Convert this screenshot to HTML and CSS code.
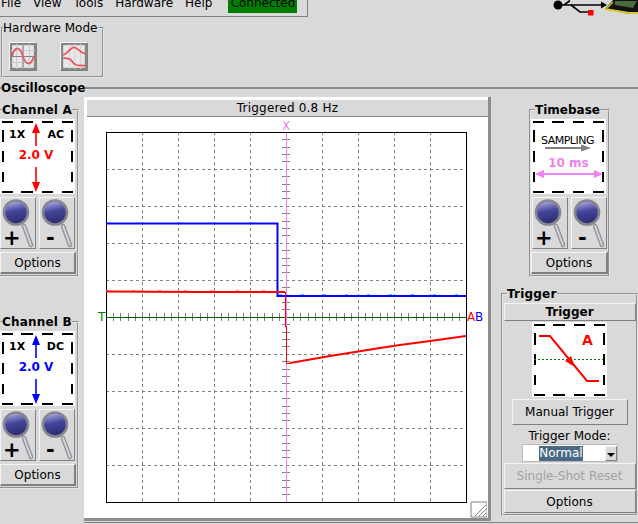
FILE: index.html
```html
<!DOCTYPE html>
<html lang="en">
<head>
    <meta charset="UTF-8">
    <title>Oscilloscope</title>
    <link rel="stylesheet" href="styles.css">
</head>
<body>
    <svg class="defs" width="0" height="0">
        <defs>
            <linearGradient id="lens" x1="0.3" y1="0" x2="0.5" y2="1">
                <stop offset="0" stop-color="#b4b4e8"/>
                <stop offset="0.45" stop-color="#45459c"/>
                <stop offset="1" stop-color="#2a2a6e"/>
            </linearGradient>
            <symbol id="magnifier" viewBox="0 0 36 52">
                <path d="M24 29 L31 48" stroke="#8f8f98" stroke-width="4.5" stroke-linecap="round"/>
                <path d="M24 29 L31 48" stroke="#d4d4dc" stroke-width="2" stroke-linecap="round"/>
                <circle cx="16" cy="15.5" r="12" fill="url(#lens)" stroke="#85858f" stroke-width="2.6"/>
            </symbol>
            <symbol id="dashes" viewBox="0 0 75 75">
                <path d="M2 3H13M21 3H33M42 3H53M62 3H73M2 73H13M21 73H33M42 73H53M62 73H73M3 11V23M3 32V43M3 53V63M72 11V23M72 32V43M72 53V63" stroke="#000" stroke-width="2" fill="none"/>
            </symbol>
        </defs>
    </svg>

    <div class="window">
        <div class="top">
            <div class="menubar">
                <span class="menu-item">File</span>
                <span class="menu-item">View</span>
                <span class="menu-item">Tools</span>
                <span class="menu-item">Hardware</span>
                <span class="menu-item">Help</span>
                <span class="status">Connected</span>
            </div>
            <svg class="usb" width="85" height="16" viewBox="0 0 85 16">
                <path d="M5 5 H50" stroke="#000" stroke-width="1.6"/>
                <path d="M48 1.5 L54 5 L48 8.5 Z" fill="#000"/>
                <circle cx="5" cy="5" r="4.5" fill="#000"/>
                <path d="M11 5 L17 0.5" stroke="#000" stroke-width="1.6"/>
                <path d="M18 5 L27 12 H35" stroke="#000" stroke-width="1.6" fill="none"/>
                <rect x="35" y="10" width="5.5" height="5.5" fill="#f00"/>
                <path d="M52 9 L60 0 H85 V14 H76 Z" fill="#111"/>
                <path d="M52 9 L76 13 H85" stroke="#d8c820" stroke-width="2" fill="none"/>
                <path d="M62 1 H84 L80 8 L62 5 Z" fill="#4a6a40"/>
                <path d="M60 2 L54 8" stroke="#d8c820" stroke-width="1.5"/>
            </svg>
        </div>

        <fieldset class="group hardware">
            <legend>Hardware Mode</legend>
            <div class="hardware-buttons">
                <button class="icon-button" type="button">
                    <svg width="26" height="27" viewBox="0 0 24 25">
                        <rect x="1" y="1" width="22" height="23" fill="#e8e8e8" stroke="#858585" stroke-width="2"/>
                        <path d="M6 1V24M12 1V24M18 1V24M1 7H23M1 18H23" stroke="#cccccc"/>
                        <path d="M12 1V24M1 12.5H23" stroke="#858585"/>
                        <path d="M2 12 C4 3 9 3 11.5 11 C14 20 19 23 22 12" stroke="#f05060" stroke-width="1.6" fill="none"/>
                    </svg>
                </button>
                <button class="icon-button" type="button">
                    <svg width="26" height="27" viewBox="0 0 24 25">
                        <rect x="1" y="1" width="22" height="23" fill="#e8e8e8" stroke="#858585" stroke-width="2"/>
                        <path d="M8 1V24M13 1V24M18 1V24" stroke="#d4d4d4"/>
                        <path d="M2 11 C7 10 8 4 12 4 C16 4 16 9 23 10" stroke="#f05060" stroke-width="1.6" fill="none"/>
                        <path d="M2 14 C8 14 9 15 11 18 C13 21 16 21 23 21" stroke="#f05060" stroke-width="1.6" fill="none"/>
                    </svg>
                </button>
            </div>
        </fieldset>

        <fieldset class="scope">
            <legend>Oscilloscope</legend>
            <div class="scope-row">
                <div class="channels">
                    <fieldset class="group channel">
                        <legend>Channel A</legend>
                        <div class="readout">
                            <svg class="dashes" width="75" height="75"><use href="#dashes"/></svg>
                            <span class="probe">1X</span>
                            <span class="coupling">AC</span>
                            <svg class="axis" width="10" height="69" viewBox="0 0 10 69">
                                <path d="M5 8V23M5 44V61" stroke="#f00" stroke-width="1.6"/>
                                <path d="M5 0 L9 10 H1 Z M5 69 L9 59 H1 Z" fill="#f00"/>
                            </svg>
                            <span class="volts red">2.0 V</span>
                        </div>
                        <div class="zoom-row">
                            <button class="zoom-button" type="button">
                                <svg width="36" height="52"><use href="#magnifier"/></svg>
                                <span class="sign">+</span>
                            </button>
                            <button class="zoom-button" type="button">
                                <svg width="36" height="52"><use href="#magnifier"/></svg>
                                <span class="sign minus">-</span>
                            </button>
                        </div>
                        <button class="options" type="button">Options</button>
                    </fieldset>
                    <fieldset class="group channel">
                        <legend>Channel B</legend>
                        <div class="readout">
                            <svg class="dashes" width="75" height="75"><use href="#dashes"/></svg>
                            <span class="probe">1X</span>
                            <span class="coupling">DC</span>
                            <svg class="axis" width="10" height="69" viewBox="0 0 10 69">
                                <path d="M5 8V23M5 44V61" stroke="#00f" stroke-width="1.6"/>
                                <path d="M5 0 L9 10 H1 Z M5 69 L9 59 H1 Z" fill="#00f"/>
                            </svg>
                            <span class="volts blue">2.0 V</span>
                        </div>
                        <div class="zoom-row">
                            <button class="zoom-button" type="button">
                                <svg width="36" height="52"><use href="#magnifier"/></svg>
                                <span class="sign">+</span>
                            </button>
                            <button class="zoom-button" type="button">
                                <svg width="36" height="52"><use href="#magnifier"/></svg>
                                <span class="sign minus">-</span>
                            </button>
                        </div>
                        <button class="options" type="button">Options</button>
                    </fieldset>
                </div>

                <div class="screen">
                    <div class="screen-title">Triggered 0.8 Hz</div>
                    <svg class="plot" width="400" height="401" viewBox="87 117 400 401">
                        <g class="grid">
                            <path d="M142.5 132V502M178.5 132V502M214.5 132V502M250.5 132V502M322.5 132V502M358.5 132V502M394.5 132V502M430.5 132V502"/>
                            <path d="M106 169.5H466M106 206.5H466M106 243.5H466M106 280.5H466M106 354.5H466M106 391.5H466M106 428.5H466M106 465.5H466"/>
                        </g>
                        <path class="ticks" d="M113.5 313V321M120.5 313V321M128.5 313V321M135.5 313V321M149.5 313V321M156.5 313V321M164.5 313V321M171.5 313V321M185.5 313V321M192.5 313V321M200.5 313V321M207.5 313V321M221.5 313V321M228.5 313V321M236.5 313V321M243.5 313V321M257.5 313V321M264.5 313V321M272.5 313V321M279.5 313V321M293.5 313V321M300.5 313V321M308.5 313V321M315.5 313V321M329.5 313V321M336.5 313V321M344.5 313V321M351.5 313V321M365.5 313V321M372.5 313V321M380.5 313V321M387.5 313V321M401.5 313V321M408.5 313V321M416.5 313V321M423.5 313V321M437.5 313V321M444.5 313V321M452.5 313V321M459.5 313V321"/>
                        <path class="ticks" d="M142.5 313V321M178.5 313V321M214.5 313V321M250.5 313V321M322.5 313V321M358.5 313V321M394.5 313V321M430.5 313V321"/>
                        <path class="ticks" d="M282 139.5H290M282 147.5H290M282 154.5H290M282 161.5H290M282 176.5H290M282 184.5H290M282 191.5H290M282 198.5H290M282 213.5H290M282 221.5H290M282 228.5H290M282 235.5H290M282 250.5H290M282 258.5H290M282 265.5H290M282 272.5H290M282 287.5H290M282 295.5H290M282 302.5H290M282 309.5H290M282 324.5H290M282 332.5H290M282 339.5H290M282 346.5H290M282 361.5H290M282 369.5H290M282 376.5H290M282 383.5H290M282 398.5H290M282 406.5H290M282 413.5H290M282 420.5H290M282 435.5H290M282 443.5H290M282 450.5H290M282 457.5H290M282 472.5H290M282 480.5H290M282 487.5H290M282 494.5H290"/>
                        <rect class="frame" x="106.5" y="132.5" width="360" height="370"/>
                        <path class="zero" d="M106 317.5H466"/>
                        <path class="cursor" d="M286.5 133V502"/>
                        <path class="noise-b" d="M279 294.5H466"/>
                        <path class="trace-b" d="M106 223.5H277.5V296H466"/>
                        <path class="noise-a" d="M106 290.5H280"/>
                        <path class="trace-a-flat" d="M106 291.5L200 292L285 292"/>
                        <path class="trace-a" d="M285.5 292L285.5 327H286.5V363.5H291"/>
                        <path class="trace-a-rise" d="M290 363L330 356L380 348L400 345L430 341L466 336"/>
                        <text class="label-x" x="286" y="130">X</text>
                        <text class="label-t" x="98" y="321">T</text>
                        <text class="label-a" x="467" y="321">A</text>
                        <text class="label-b" x="475" y="321">B</text>
                        <g class="grip">
                            <path d="M471 502H487V517H471Z" fill="#d9d9d9" stroke="none"/>
                            <path d="M475 516L486 505M479 516L486 509M483 516L486 513"/>
                        </g>
                    </svg>
                </div>

                <div class="controls">
                    <fieldset class="group timebase">
                        <legend>Timebase</legend>
                        <div class="readout">
                            <svg class="dashes" width="75" height="75"><use href="#dashes"/></svg>
                            <span class="sampling">SAMPLING</span>
                            <svg class="sampling-arrow" width="46" height="8" viewBox="0 0 46 8">
                                <path d="M0 4H38" stroke="#808080" stroke-width="2"/>
                                <path d="M46 4L36 0.5V7.5Z" fill="#808080"/>
                            </svg>
                            <span class="volts pink">10 ms</span>
                            <svg class="time-arrow" width="68" height="10" viewBox="0 0 68 10">
                                <path d="M5 5H63" stroke="#ee82ee" stroke-width="2"/>
                                <path d="M0 5L9 1V9ZM68 5L59 1V9Z" fill="#ee82ee"/>
                            </svg>
                        </div>
                        <div class="zoom-row">
                            <button class="zoom-button" type="button">
                                <svg width="36" height="52"><use href="#magnifier"/></svg>
                                <span class="sign">+</span>
                            </button>
                            <button class="zoom-button" type="button">
                                <svg width="36" height="52"><use href="#magnifier"/></svg>
                                <span class="sign minus">-</span>
                            </button>
                        </div>
                        <button class="options" type="button">Options</button>
                    </fieldset>

                    <fieldset class="group trigger">
                        <legend>Trigger</legend>
                        <button class="trigger-title" type="button">Trigger</button>
                        <div class="readout trigger-box">
                            <svg class="dashes" width="75" height="75"><use href="#dashes"/></svg>
                            <svg class="trigger-curve" width="75" height="75" viewBox="0 0 75 75">
                                <path d="M2 37.5H71" stroke="#008000" stroke-dasharray="2 2"/>
                                <path d="M7 14H18L55 59H67" stroke="#f00" stroke-width="2" fill="none"/>
                                <path d="M43 45L39 34L33 39Z" fill="#f00"/>
                                <text class="trigger-source" x="50" y="23">A</text>
                            </svg>
                        </div>
                        <button class="manual" type="button">Manual Trigger</button>
                        <div class="mode-label">Trigger Mode:</div>
                        <div class="mode-select">
                            <span class="mode-value">Normal</span>
                            <span class="mode-arrow"></span>
                        </div>
                        <button class="reset" type="button" disabled>Single-Shot Reset</button>
                        <button class="options trigger-options" type="button">Options</button>
                    </fieldset>
                </div>
            </div>
            <div class="bottom-line"></div>
        </fieldset>
    </div>
</body>
</html>
```

FILE: styles.css
```css
* {
    box-sizing: border-box;
}
html, body {
    margin: 0;
    padding: 0;
}
body {
    width: 638px;
    height: 524px;
    overflow: hidden;
    background: #d9d9d9;
    font-family: 'DejaVu Sans', sans-serif;
    font-size: 12px;
    color: #000;
}
button {
    font-family: inherit;
    font-size: 12px;
    color: #000;
    margin: 0;
    padding: 0;
    background: #d9d9d9;
    border-radius: 0;
    border: 1px solid;
    border-color: #f4f4f4 #808080 #808080 #f4f4f4;
}
fieldset {
    margin: 0;
    padding: 0;
    min-width: 0;
}
legend {
    padding: 0;
    line-height: 14px;
}
.defs {
    position: absolute;
}
.window {
    width: 638px;
    height: 524px;
    overflow: hidden;
}
.top {
    height: 21px;
    display: flex;
    justify-content: space-between;
}
.menubar {
    width: 308px;
    height: 17px;
    display: flex;
    border-right: 1px solid #808080;
    border-bottom: 1px solid #808080;
    padding-left: 1px;
    line-height: 8px;
}
.menu-item {
    margin-right: 12px;
    margin-top: -1px;
}
.status {
    height: 13px;
    width: 69px;
    margin-left: 4px;
    background: #008000;
    text-align: center;
    line-height: 7px;
}
.group {
    border: 2px groove #e6e6e6;
}
.group legend {
    margin-left: 2px;
}
.hardware {
    width: 103px;
    height: 57px;
    margin-left: 1px;
}
.hardware legend {
    margin-left: 0;
    padding-right: 1px;
}
.hardware-buttons {
    display: flex;
    gap: 23px;
    padding: 7px 0 0 6px;
}
.icon-button {
    width: 28px;
    height: 29px;
    display: flex;
    align-items: center;
    justify-content: center;
}
.scope {
    border: none;
    border-top: 2px solid #8c8c8c;
    margin-top: 3px;
    height: 443px;
}
.scope > legend {
    font-weight: bold;
    margin-left: 1px;
}
.scope-row {
    display: flex;
    padding-top: 2px;
}
.channels {
    width: 84px;
    flex: none;
    display: flex;
    flex-direction: column;
    gap: 38px;
    padding-top: 6px;
}
.channel legend, .trigger legend {
    font-weight: bold;
    letter-spacing: 0.2px;
}
.channel {
    width: 79px;
    height: 174px;
    padding-top: 2px;
    border-left: none;
}
.readout {
    width: 75px;
    height: 75px;
    background: #fff;
    position: relative;
}
.dashes {
    position: absolute;
    left: 0;
    top: 0;
}
.probe, .coupling {
    position: absolute;
    top: 9px;
    font-weight: bold;
    font-size: 11px;
    line-height: 14px;
}
.probe {
    left: 9px;
}
.coupling {
    right: 11px;
}
.axis {
    position: absolute;
    left: 31px;
    top: 4px;
}
.volts {
    position: absolute;
    left: 0;
    width: 72px;
    top: 29px;
    text-align: center;
    font-weight: bold;
    line-height: 14px;
}
.red {
    color: #f00;
}
.blue {
    color: #00f;
}
.pink {
    color: #ee82ee;
    top: 37px;
    width: 75px;
}
.zoom-row {
    display: flex;
    gap: 3px;
    margin-top: 3px;
}
.zoom-button {
    width: 36px;
    height: 52px;
    position: relative;
}
.zoom-button svg {
    display: block;
    position: absolute;
    left: -1px;
    top: -1px;
}
.sign {
    position: absolute;
    left: 2px;
    top: 31px;
    font-size: 21px;
    font-weight: bold;
    line-height: 18px;
}
.minus {
    left: 6px;
}
.options {
    display: block;
    width: 76px;
    height: 22px;
    margin-top: 3px;
    border-width: 1px 2px 2px 1px;
}
.screen {
    width: 407px;
    height: 424px;
    flex: none;
    background: #fff;
    border-right: 3px solid #8c8c8c;
    border-bottom: 3px solid #8c8c8c;
    padding: 3px 0 0 3px;
}
.screen-title {
    height: 17px;
    line-height: 16px;
    text-align: center;
    letter-spacing: 0.2px;
    background: #d9d9d9;
    border-bottom: 1px solid #808080;
}
.plot {
    display: block;
}
.grid path {
    stroke: #808080;
    stroke-dasharray: 3 3;
    fill: none;
}
.ticks {
    stroke: #808080;
    fill: none;
}
.frame {
    fill: none;
    stroke: #000;
}
.zero {
    stroke: #006400;
    fill: none;
}
.cursor {
    stroke: #ee82ee;
    fill: none;
}
.trace-b {
    stroke: #00f;
    stroke-width: 2;
    fill: none;
}
.noise-b {
    stroke: #40c8ff;
    stroke-dasharray: 3 19;
    fill: none;
}
.noise-a {
    stroke: #ff9090;
    stroke-dasharray: 3 23;
    fill: none;
}
.trace-a-flat {
    stroke: #f00;
    stroke-width: 2;
    fill: none;
}
.trace-a {
    stroke: #f00;
    fill: none;
}
.trace-a-rise {
    stroke: #f00;
    stroke-width: 2;
    fill: none;
}
.plot text {
    font-size: 12px;
}
.label-x {
    fill: #ee82ee;
    text-anchor: middle;
}
.label-t {
    fill: #008000;
}
.label-a {
    fill: #f00;
}
.label-b {
    fill: #00f;
}
.grip path {
    stroke: #808080;
    fill: none;
}
.controls {
    flex: none;
    width: 147px;
    padding-top: 6px;
}
.timebase {
    width: 81px;
    height: 174px;
    margin-left: 38px;
    padding: 2px 0 0 0;
}
.timebase legend {
    margin-left: 4px;
    font-weight: bold;
}
.timebase .zoom-row {
    padding-left: 1px;
}
.timebase .options {
    width: 77px;
}
.sampling {
    position: absolute;
    left: 0;
    right: 2px;
    top: 15px;
    text-align: center;
    font-size: 11px;
    letter-spacing: -0.5px;
    line-height: 13px;
}
.sampling-arrow {
    position: absolute;
    left: 14px;
    top: 25px;
}
.time-arrow {
    position: absolute;
    left: 4px;
    top: 50px;
}
.trigger {
    width: 137px;
    height: 229px;
    margin-top: 10px;
    margin-left: 10px;
    padding-top: 2px;
    display: flex;
    flex-direction: column;
    align-items: center;
}
.trigger legend {
    margin-left: 4px;
}
.trigger-title {
    width: 132px;
    height: 18px;
    font-weight: bold;
    flex: none;
}
.trigger-box {
    flex: none;
    margin-top: 1px;
}
.trigger-curve {
    position: absolute;
    left: 0;
    top: 0;
}
.trigger-source {
    fill: #f00;
    font-weight: bold;
    font-size: 14px;
}
.manual {
    width: 116px;
    height: 26px;
    margin-top: 2px;
    flex: none;
}
.mode-label {
    margin-top: 4px;
    line-height: 15px;
    flex: none;
}
.mode-select {
    width: 96px;
    height: 18px;
    flex: none;
    background: #fff;
    position: relative;
    border: 1px solid #bbb;
    display: flex;
    justify-content: center;
    align-items: center;
}
.mode-value {
    background: #4a6984;
    color: #fff;
    line-height: 15px;
    margin-right: 17px;
}
.mode-arrow {
    position: absolute;
    right: 0;
    top: 1px;
    bottom: 0;
    width: 12px;
    background: #d9d9d9;
    border: 1px solid;
    border-color: #f4f4f4 #808080 #808080 #f4f4f4;
}
.mode-arrow::after {
    content: "";
    position: absolute;
    left: 1px;
    top: 6px;
    border: 4px solid transparent;
    border-top: 4px solid #000;
}
.reset {
    width: 132px;
    height: 26px;
    margin-top: 1px;
    flex: none;
    color: #a3a3a3;
}
.trigger-options {
    width: 132px;
    height: 23px;
    margin-top: 1px;
    flex: none;
    border-width: 1px;
}
.bottom-line {
    height: 1px;
    margin: 1px 0 0 84px;
    background: #808080;
}
```
